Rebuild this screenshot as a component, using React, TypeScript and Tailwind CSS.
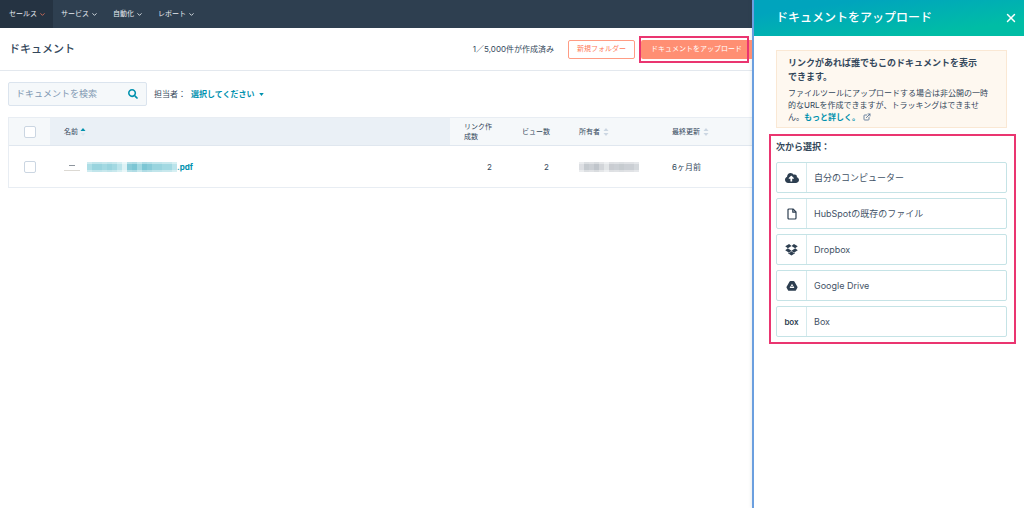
import type { ReactNode } from "react";
import { ChevronDown, ExternalLink, X } from "lucide-react";
import { FaCloudUploadAlt, FaSearch } from "react-icons/fa";

const navItems = [
  { label: "セールス", active: true },
  { label: "サービス", active: false },
  { label: "自動化", active: false },
  { label: "レポート", active: false },
];

function DriveIcon() {
  return (
    <svg viewBox="0 0 24 24" className="h-3 w-3" aria-hidden="true">
      <path
        fill="currentColor"
        fillRule="evenodd"
        d="M9 2h6q1.2 0 1.8 1l6 10.500q.6 1 0 2l-2.800 5q-.6 1-1.800 1H5.800q-1.200 0-1.800-1l-2.800-5q-.6-1 0-2L7.200 3Q7.800 2 9 2ZM12 7.500 7.200 16h9.600ZM12 11l1.700 3h-3.400Z"
      />
    </svg>
  );
}

function DropboxIcon() {
  return (
    <svg viewBox="0 0 24 24" className="h-[13px] w-[13px]" aria-hidden="true">
      <g fill="currentColor">
        <path d="M7.500 2 12 5.700 5.200 9.900 .5 6.200Z" />
        <path d="M16.500 2 12 5.700l6.800 4.200 4.700-3.700Z" />
        <path d="M.5 13.600 5.200 9.900l6.800 4.200-4.500 3.700Z" />
        <path d="M23.500 13.600 18.800 9.900 12 14.100l4.500 3.700Z" />
        <path d="M12 15.200 7.500 18.900l-2-1.300v1.500L12 23l6.500-3.900v-1.500l-2 1.300Z" />
      </g>
    </svg>
  );
}

function PageIcon() {
  return (
    <svg
      viewBox="0 0 12 12"
      className="h-3 w-3"
      fill="none"
      stroke="currentColor"
      strokeWidth="1.200"
      strokeLinejoin="round"
      aria-hidden="true"
    >
      <path d="M3 1h4l3 3v6q0 1-1 1H3q-1 0-1-1V2q0-1 1-1Z" />
      <path d="M6.800 1v3.200H10" />
    </svg>
  );
}

const sources: { label: string; icon: ReactNode }[] = [
  { label: "自分のコンピューター", icon: <FaCloudUploadAlt className="h-3.5 w-3.5" /> },
  { label: "HubSpotの既存のファイル", icon: <PageIcon /> },
  { label: "Dropbox", icon: <DropboxIcon /> },
  { label: "Google Drive", icon: <DriveIcon /> },
  { label: "Box", icon: <span className="text-[8px] leading-3 font-semibold">box</span> },
];

function SortIcon({ ascending = false }: { ascending?: boolean }) {
  return (
    <svg viewBox="0 0 6 10" className="h-[10px] w-[6px] shrink-0" aria-hidden="true">
      <path d="M3 1 5.500 4h-5Z" fill={ascending ? "#0091ae" : "#cbd6e2"} />
      <path d="M3 9 5.500 6h-5Z" fill={ascending ? "#dde5ee" : "#cbd6e2"} />
    </svg>
  );
}

function Mosaic({ colors, label }: { colors: string[]; label: string }) {
  return (
    <svg
      role="img"
      aria-label={label}
      viewBox={`0 0 ${colors.length * 5} 10`}
      className="h-[10px] shrink-0"
    >
      {colors.map((color, i) => (
        <g key={i} fill={color}>
          <rect x={i * 5} y="0" width="5" height="10" opacity="0.55" />
          <rect x={i * 5} y="2" width="5" height="6" opacity="0.8" />
        </g>
      ))}
    </svg>
  );
}

const nameMosaic = [
  "#a5dbe4", "#8ecfdb", "#8ecfdb", "#9ad5df", "#8ecfdb", "#9ad5df", "#b4e1e8", "#d9f0f4",
  "#7cc6d4", "#6fc0cf", "#9ad5df", "#6fc0cf", "#7cc6d4", "#8ecfdb", "#8ecfdb", "#9ad5df",
  "#9ad5df", "#b4e1e8",
];
const ownerMosaic = [
  "#d9dce0", "#bfc4ca", "#c6cacf", "#b9bfc5", "#cdd1d5", "#dfe2e5", "#c3c7cc", "#c6cacf",
  "#c0c5ca", "#c6cacf", "#c6cacf", "#d0d4d8",
];

const checkboxClass =
  "block h-3 w-3 appearance-none rounded-[2px] border border-[#cbd6e2] bg-white checked:bg-[#00a4bd]";

export default function App() {
  return (
    <div className="flex min-h-screen bg-white font-['Inter','Noto_Sans_CJK_JP',sans-serif] text-[8px] text-[#33475b]">
      <div className="min-w-0 flex-1 overflow-hidden">
        <nav className="flex h-7 bg-[#2e3f50] text-[7px] text-[#e6ebf0]">
          {navItems.map((item) => (
            <button
              key={item.label}
              type="button"
              className={
                item.active
                  ? "flex items-center gap-0.5 bg-[#253342] pr-[7px] pl-[9px]"
                  : "flex items-center gap-0.5 pr-[7px] pl-2"
              }
            >
              {item.label}
              <ChevronDown
                className={item.active ? "h-[7px] w-[7px] text-[#d9705a]" : "h-[7px] w-[7px]"}
                strokeWidth={3}
              />
            </button>
          ))}
        </nav>

        <header className="flex h-[43px] items-center border-b border-[#e3e8ee] pl-[9px]">
          <h1 className="flex-1 text-[11px] font-medium">ドキュメント</h1>
          <p className="mr-[14px]">1／5,000件が作成済み</p>
          <button
            type="button"
            className="mr-[6px] h-[19px] rounded-[2px] border border-[#ff9c84] px-2 text-[7px] text-[#ff7a59]"
          >
            新規フォルダー
          </button>
          <div className="relative">
            <button
              type="button"
              className="block h-[19px] rounded-l-[2px] bg-[#ff8f73] px-[10px] text-[7px] text-white"
            >
              ドキュメントをアップロード
            </button>
            <div className="pointer-events-none absolute -inset-y-1 right-[3px] -left-[2px] border-2 border-[#ea3570]" />
          </div>
        </header>

        <main className="pt-[11px] pl-2">
          <div className="flex items-center">
            <label className="flex h-6 w-[139px] items-center rounded-[2px] border border-[#dbe4ee] bg-[#f5f8fa] pr-[8px] pl-[7px]">
              <input
                type="text"
                aria-label="ドキュメントを検索"
                placeholder="ドキュメントを検索"
                className="min-w-0 flex-1 bg-transparent text-[9px] outline-none placeholder:text-[#8299b3]"
              />
              <FaSearch className="h-[10px] w-[10px] text-[#0091ae]" />
            </label>
            <span className="ml-[7px]">担当者：</span>
            <button type="button" className="ml-[5px] flex items-center gap-1 font-bold text-[#0091ae]">
              選択してください
              <svg viewBox="0 0 6 4" className="h-[3px] w-[5px]" aria-hidden="true">
                <path d="M0 0h6L3 4Z" fill="currentColor" />
              </svg>
            </button>
          </div>

          <table className="mt-[11px] w-full table-fixed border-separate border-spacing-0 border border-r-0 border-[#e8edf3] text-left">
            <thead className="bg-[#f5f8fa] text-[7px] leading-[10px]">
              <tr className="h-7">
                <th className="w-[41px] border-b border-[#e0e7ef] pl-[15px]">
                  <input type="checkbox" aria-label="すべて選択" className={checkboxClass} />
                </th>
                <th className="border-b border-[#e0e7ef] bg-[#eaf0f6] pl-[14px] font-normal">
                  <span className="flex items-center gap-0.5">
                    名前 <SortIcon ascending />
                  </span>
                </th>
                <th className="w-[58px] border-b border-[#e0e7ef] px-[14px] font-normal">リンク作成数</th>
                <th className="w-[57px] border-b border-[#e0e7ef] pl-[14px] font-normal">ビュー数</th>
                <th className="w-[93px] border-b border-[#e0e7ef] pl-[14px] font-normal">
                  <span className="flex items-center gap-[3px]">
                    所有者 <SortIcon />
                  </span>
                </th>
                <th className="w-[94px] border-b border-[#e0e7ef] pl-[14px] font-normal">
                  <span className="flex items-center gap-[3px]">
                    最終更新 <SortIcon />
                  </span>
                </th>
              </tr>
            </thead>
            <tbody>
              <tr className="h-[41px]">
                <td className="pl-[15px]">
                  <input type="checkbox" aria-label="行を選択" className={checkboxClass} />
                </td>
                <td className="pl-[14px]">
                  <div className="flex items-center">
                    <svg viewBox="0 0 16 10" className="mr-[7px] h-[10px] w-4" aria-hidden="true">
                      <rect x="5" y="3" width="6" height="1" fill="#8d959d" />
                      <rect x="0" y="8" width="16" height="1" fill="#dcd9d3" />
                    </svg>
                    <a href="#document" className="flex items-center font-bold text-[#0091ae]">
                      <Mosaic colors={nameMosaic} label="ファイル名" />
                      .pdf
                    </a>
                  </div>
                </td>
                <td className="pr-4 text-right">2</td>
                <td className="pr-4 text-right">2</td>
                <td className="pl-[14px]">
                  <Mosaic colors={ownerMosaic} label="所有者名" />
                </td>
                <td className="pl-[14px]">6ヶ月前</td>
              </tr>
            </tbody>
          </table>
        </main>
      </div>

      <aside className="w-[272px] shrink-0 border-l-2 border-[#6b9fdf] bg-white shadow-[0_0_4px_rgba(45,62,80,0.15)]">
        <header className="flex h-9 items-center justify-between bg-linear-to-br from-[#00a4bd] from-20% to-[#00bda5] to-80% pr-[6px] pl-[22px] text-white">
          <h2 className="text-[12px] font-medium">ドキュメントをアップロード</h2>
          <button type="button" aria-label="閉じる">
            <X className="h-3.5 w-3.5" strokeWidth={2.5} />
          </button>
        </header>

        <div className="pt-[14px] pr-2 pl-[15px]">
          <section className="mr-[9px] ml-[7px] border border-[#fae8d4] bg-[#fef8f0] pt-[5px] pr-[17px] pb-[4px] pl-[11px]">
            <h3 className="pr-[6px] text-[9px] leading-[14px] font-bold">
              リンクがあれば誰でもこのドキュメントを表示できます。
            </h3>
            <p className="mt-[3px] text-[8px] leading-3">
              ファイルツールにアップロードする場合は非公開の一時的なURLを作成できますが、トラッキングはできません。
              <a
                href="#learn-more"
                className="inline-flex items-center gap-[3px] align-top font-bold text-[#0091ae]"
              >
                もっと詳しく。
                <ExternalLink className="h-2 w-2 text-[#506e91]" strokeWidth={2.5} />
              </a>
            </p>
          </section>

          <section className="mt-[6px] border-2 border-[#ea3570] pt-[5px] pr-[7px] pb-[5px] pl-[5px]">
            <h3 className="text-[9px] leading-[12px] font-bold">次から選択：</h3>
            <ul className="mt-[9px] flex flex-col gap-[5px]">
              {sources.map((source) => (
                <li key={source.label}>
                  <button
                    type="button"
                    className="flex h-[31px] w-full items-stretch rounded-[2px] border border-[#c5e3e6] bg-white text-left text-[9px]"
                  >
                    <span className="flex w-[30px] items-center justify-center border-r border-[#d5eaed] text-[#2d3e50]">
                      {source.icon}
                    </span>
                    <span className="flex items-center pl-[7px] text-[#3f5266]">{source.label}</span>
                  </button>
                </li>
              ))}
            </ul>
          </section>
        </div>
      </aside>
    </div>
  );
}
